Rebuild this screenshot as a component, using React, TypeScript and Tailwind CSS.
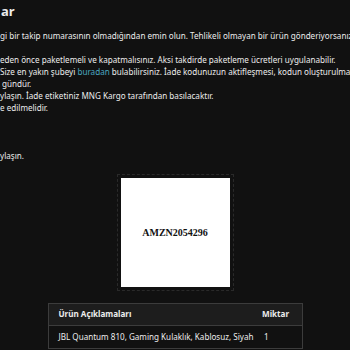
const lines = {
  first: 'gi bir takip numarasının olmadığından emin olun. Tehlikeli olmayan bir ürün gönderiyorsanız tüm',
  second: 'eden önce paketlemeli ve kapatmalısınız. Aksi takdirde paketleme ücretleri uygulanabilir.',
};

export default function App() {
  return (
    <div
      className="w-[350px] h-[350px] overflow-hidden bg-[#111111] text-[#ececec]"
      style={{ fontFamily: '"Noto Sans", "Open Sans", sans-serif' }}
    >
      <div className="whitespace-nowrap text-[8.1px] leading-[12px]">
        <h2 className="text-[13px] font-bold leading-[22px] pl-[1px]">ar</h2>

        <p className="mt-[8px]">{lines.first}</p>

        <div className="mt-[12px]">
          <p>{lines.second}</p>
          <p>
            Size en yakın şubeyi <span className="text-[#4aa8c0]">buradan</span> bulabilirsiniz. İade kodunuzun
            aktifleşmesi, kodun oluşturulmasında
          </p>
          <p>&nbsp;gündür.</p>
          <p>ylaşın. İade etiketiniz MNG Kargo tarafından basılacaktır.</p>
          <p>e edilmelidir.</p>
        </div>

        <p className="mt-[36px]">ylaşın.</p>
      </div>

      {/* barcode */}
      <div className="flex justify-center mt-[12px]">
        <div className="p-[3px] border border-dashed border-[#2a2a2a]">
          <div className="w-[109px] h-[109px] bg-white flex items-center justify-center">
            <span
              className="text-[#111] text-[10px] font-bold"
              style={{ fontFamily: '"Liberation Serif", serif' }}
            >
              AMZN2054296
            </span>
          </div>
        </div>
      </div>

      {/* products */}
      <div className="flex justify-center mt-[12px]">
        <table className="w-[255px] table-fixed border border-[#3c3c3c] text-[8.1px] border-collapse whitespace-nowrap">
          <colgroup>
            <col className="w-[214px]" />
            <col />
          </colgroup>
          <thead>
            <tr className="bg-[#1d1d1d] h-[22px]">
              <th className="text-left font-bold pl-[10px] border-b border-[#3c3c3c]">Ürün Açıklamaları</th>
              <th className="text-left font-bold border-b border-[#3c3c3c]">Miktar</th>
            </tr>
          </thead>
          <tbody>
            <tr className="h-[23px]">
              <td className="pl-[10px]">JBL Quantum 810, Gaming Kulaklık, Kablosuz, Siyah</td>
              <td className="pl-[2px]">1</td>
            </tr>
          </tbody>
        </table>
      </div>
    </div>
  );
}
